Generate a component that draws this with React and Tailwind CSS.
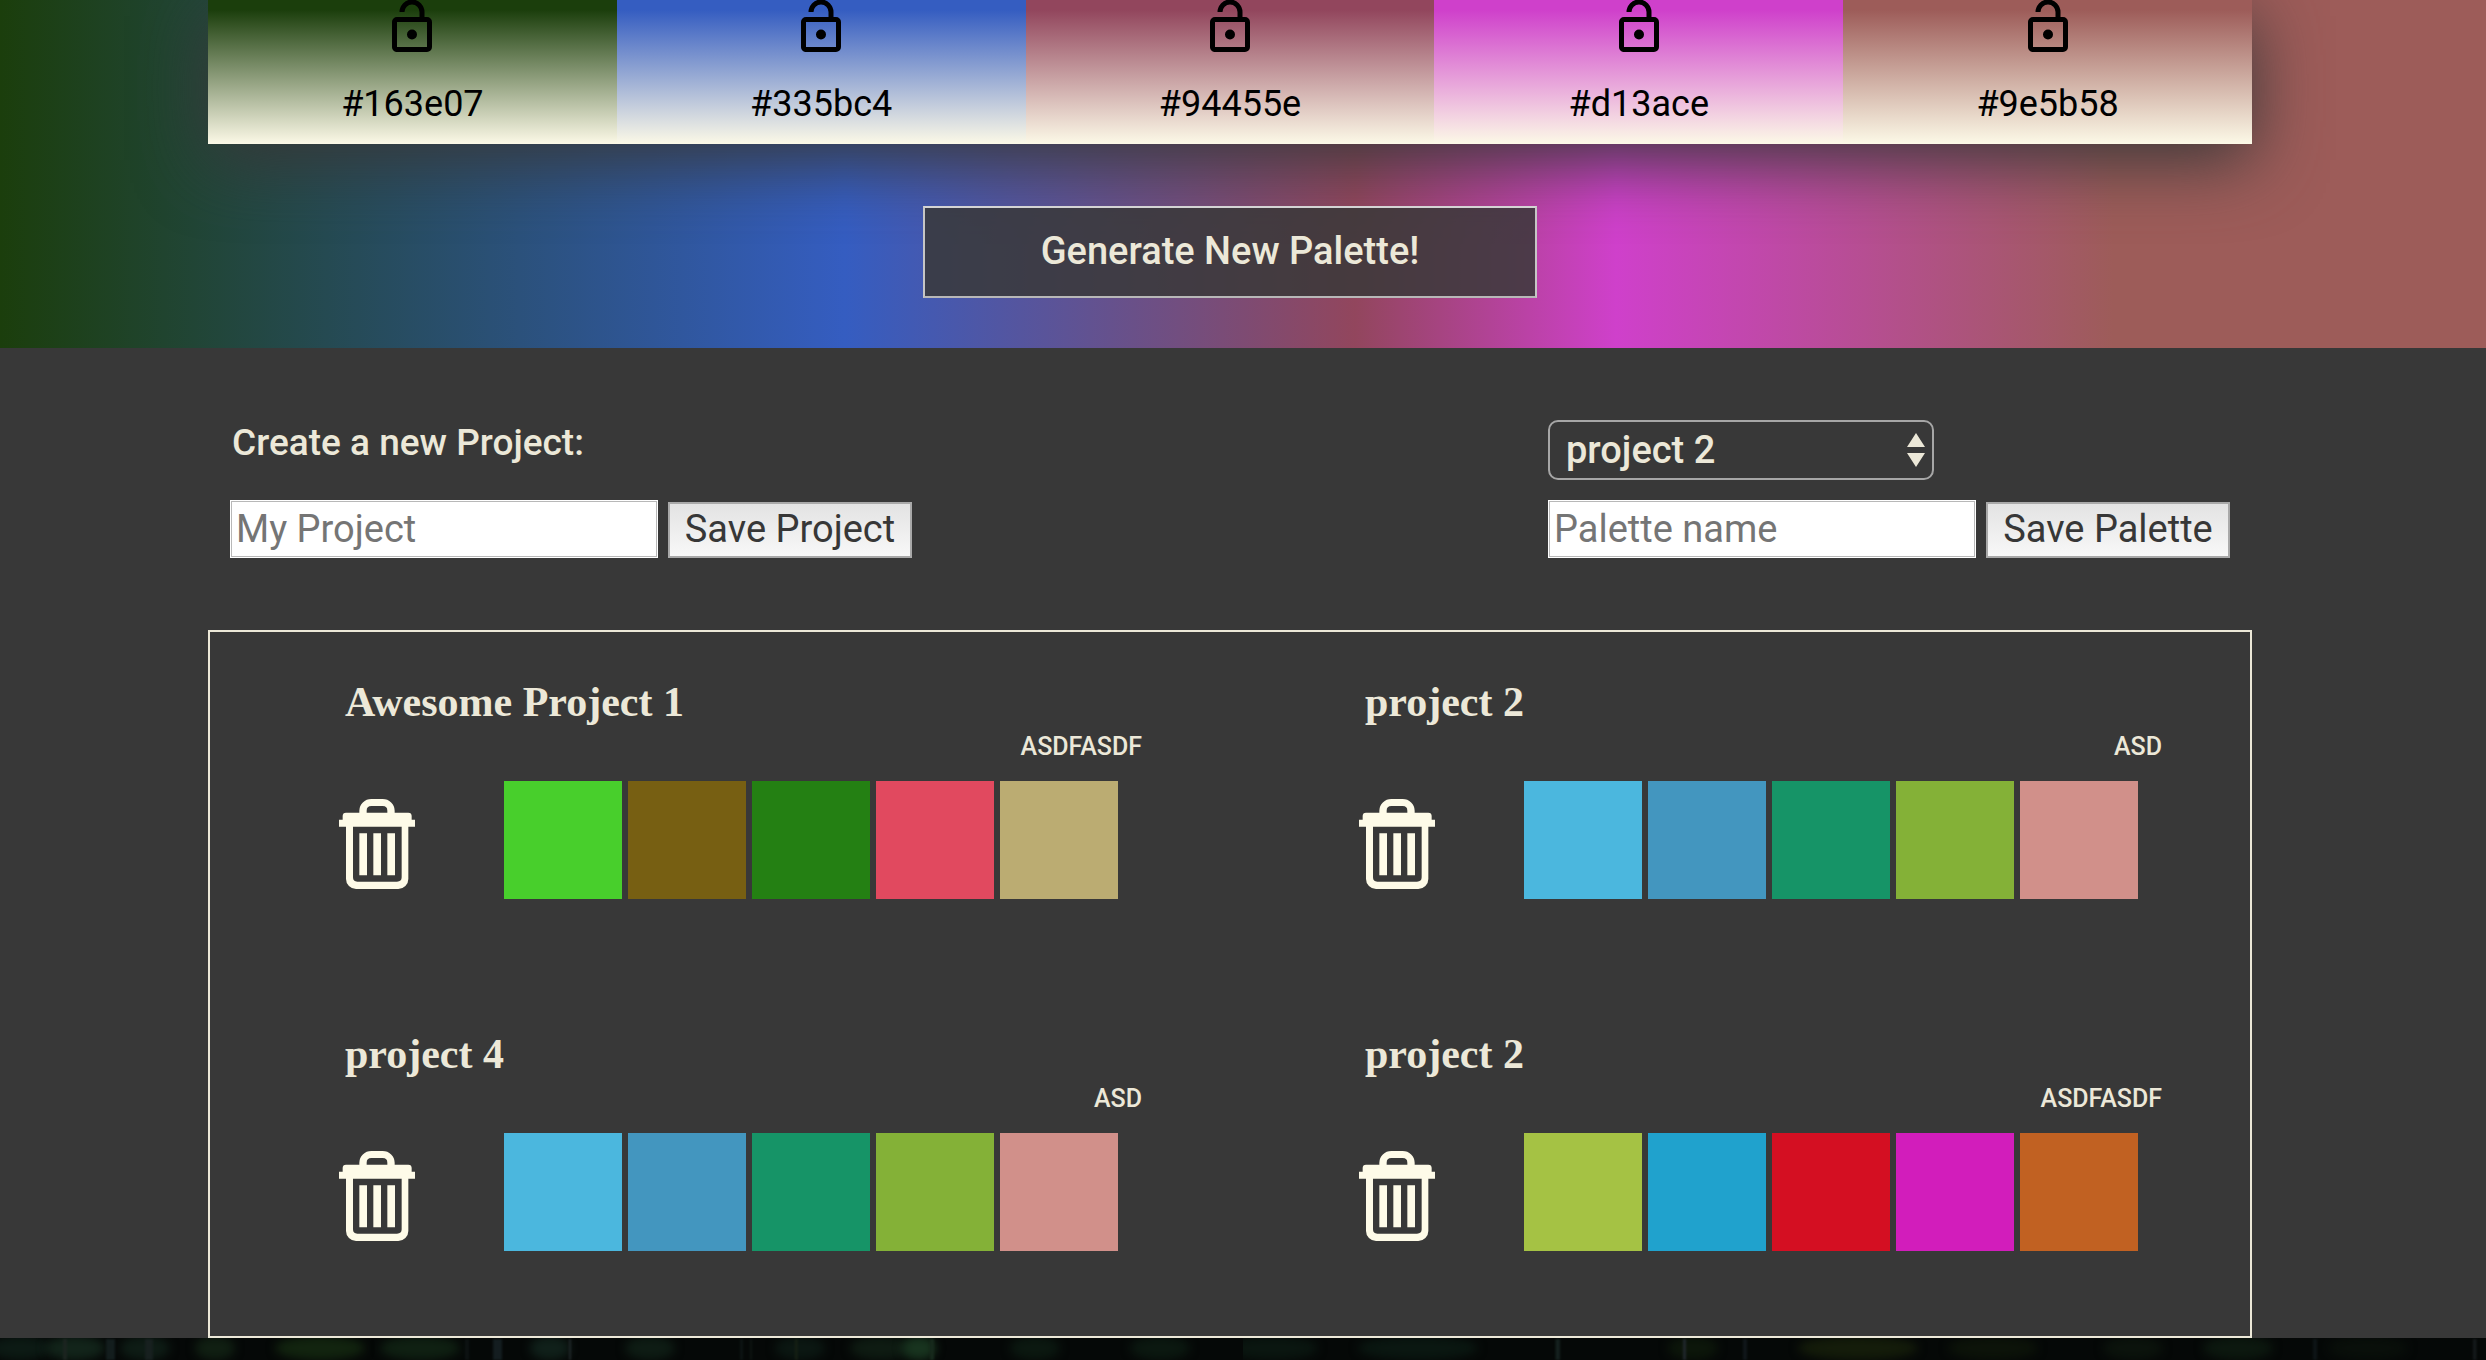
const palette = [
  { hex: "#163e07", swatch: "bg-linear-[180deg,#1b3e0c_10px,#fcf9e7_100%]" },
  { hex: "#335bc4", swatch: "bg-linear-[180deg,#355dc1_10px,#fcf9e7_100%]" },
  { hex: "#94455e", swatch: "bg-linear-[180deg,#92465d_10px,#fcf9e7_100%]" },
  { hex: "#d13ace", swatch: "bg-linear-[180deg,#cf40cb_10px,#fcf9e7_100%]" },
  { hex: "#9e5b58", swatch: "bg-linear-[180deg,#9d5c59_10px,#fcf9e7_100%]" },
];

const lagoon = ["#4bb7de", "#4396bf", "#169467", "#84b137", "#d1908a"];

const projects = [
  { title: "Awesome Project 1", name: "ASDFASDF", colors: ["#48cf2c", "#775f12", "#248013", "#e1495f", "#bbac72"] },
  { title: "project 2", name: "ASD", colors: lagoon },
  { title: "project 4", name: "ASD", colors: lagoon },
  { title: "project 2", name: "ASDFASDF", colors: ["#a5c244", "#20a2cd", "#d40f22", "#d21dbb", "#c16122"] },
];

function LockOpen() {
  return (
    <svg viewBox="0 0 24 24" className="size-15" fill="currentColor" aria-hidden="true">
      <path d="M18,20V10H6V20H18M18,8A2,2 0 0,1 20,10V20A2,2 0 0,1 18,22H6C4.89,22 4,21.1 4,20V10A2,2 0 0,1 6,8H15V6A3,3 0 0,0 12,3A3,3 0 0,0 9,6H7A5,5 0 0,1 12,1A5,5 0 0,1 17,6V8H18M12,17A2,2 0 0,1 10,15A2,2 0 0,1 12,13A2,2 0 0,1 14,15A2,2 0 0,1 12,17Z" />
    </svg>
  );
}

function Trash() {
  return (
    <svg viewBox="57 57 228 270" className="h-[90px] w-[76px]" fill="#fefbe8" aria-hidden="true">
      <path
        fillRule="evenodd"
        d="M118 98V92A36 35 0 0 1 154 57H188A36 35 0 0 1 224 92V98H265Q275 98 275 108V119H285V140H265V297A30 30 0 0 1 235 327H108A30 30 0 0 1 78 297V140H57V119H68V108Q68 98 78 98ZM140 98H202V92Q202 78 188 78H154Q140 78 140 92ZM99 140V292Q99 305 112 305H231Q245 305 245 292V140Z"
      />
      <path d="M118 160H141V286H118ZM160 160H183V286H160ZM202 160H225V286H202Z" />
    </svg>
  );
}

// Dark woodland strip: blurred foliage with faint upright trunks.
const foliage = [
  [40, 60, "#0c1a14"], [150, 60, "#12241a"], [290, 50, "#0e1c15"], [430, 40, "#101f12"], [640, 90, "#12240f"],
  [840, 80, "#0f2012"], [1100, 40, "#10201a"], [1300, 50, "#0e1c14"], [1600, 50, "#0b1712"], [1760, 60, "#0e1b12"],
  [1838, 34, "#18341f"], [2070, 50, "#0b1810"], [2320, 60, "#0b1810"],
];
const foliageRight = [
  [60, 90, "#0a1610"], [350, 120, "#0a1711"], [900, 50, "#0c160a"], [1230, 120, "#141c0a"], [1500, 90, "#0c1309"],
  [1780, 60, "#0b130c"], [1990, 70, "#0c180f"], [2250, 80, "#090f0a"],
];
const trunks = [
  [126, 8, "#1b2420"], [212, 18, "#131d1d"], [290, 16, "#17201f"], [930, 8, "#0d1313"], [986, 18, "#141d20"],
  [1138, 4, "#20272a"], [1480, 6, "#0d1413"], [1500, 4, "#0d1413"], [1590, 5, "#172014"], [1860, 8, "#17291c"],
];
const trunksRight = [[625, 9, "#15211f"], [880, 6, "#20272b"], [1000, 8, "#10171a"], [2140, 8, "#0e1517"], [2460, 7, "#15191b"]];

function ForestHalf({ leaves, stems }) {
  return (
    <svg viewBox="0 0 2486 44" preserveAspectRatio="none" className="h-full w-1/2" aria-hidden="true">
      {leaves.map(([x, r, fill]) => (
        <ellipse key={x} cx={x} cy="20" rx={r} ry="24" fill={fill} className="blur-[10px]" />
      ))}
      {stems.map(([x, w, fill]) => (
        <rect key={x} x={x} y="2" width={w} height="42" fill={fill} className="blur-[2px]" />
      ))}
    </svg>
  );
}

function SaveRow({ id, label, placeholder, action }) {
  return (
    <div className="flex items-end gap-[10px]">
      <input
        id={id}
        aria-label={label}
        placeholder={placeholder}
        className="h-[58px] w-[428px] border border-white bg-white px-[5px] text-[#373737] ring-1 ring-[#b8b8b8] ring-inset placeholder:text-[#757575]"
      />
      <button className="h-14 w-[244px] border-2 border-[#a9a9a9] bg-linear-to-b from-[#e3e3e3] to-[#f8f8f8] pb-[2px] leading-[50px] text-[#373737]">
        {action}
      </button>
    </div>
  );
}

function Project({ title, name, colors }) {
  return (
    <article className="h-[352px] pt-11 pr-[88px]">
      <h2 className="pl-[135px] font-['Liberation_Serif',serif] text-[42px] leading-[52px] font-bold">{title}</h2>
      <p className="text-right text-[25px] leading-[38px] font-medium uppercase">{name}</p>
      <div className="flex pt-[15px] pl-[129px]">
        <button aria-label={`Delete ${name}`} className="mt-[18px] mr-[89px] h-[90px]">
          <Trash />
        </button>
        <ul className="flex gap-[6px]">
          {colors.map((color) => (
            <li key={color} className="size-[118px]" style={{ backgroundColor: color }} />
          ))}
        </ul>
      </div>
    </article>
  );
}

export default function App() {
  return (
    <div className="font-[Roboto,sans-serif] text-[38px] text-[#ece8d8]">
      <header className="bg-linear-[90deg,#1b3e0c_0%,#355dc1_34%,#92465d_54.5%,#cf40cb_65%,#9d5c59_85%] pr-[234px] pb-[50px] pl-[208px]">
        <ul className="grid grid-cols-5 text-black shadow-[0_16px_70px_0_#383838]">
          {palette.map(({ hex, swatch }) => (
            <li key={hex} className={`flex h-36 flex-col items-center ${swatch}`}>
              <button aria-label={`Lock ${hex}`} className="-mt-[3px] h-15">
                <LockOpen />
              </button>
              <span className="mt-[26px] text-[36px] leading-[42px]">{hex}</span>
            </li>
          ))}
        </ul>
        <div className="flex justify-center pt-[62px]">
          <button className="h-[92px] w-[30%] border-2 border-t-[#d4d4d4] border-r-[#c6c6c6] border-b-[#b8b8b8] border-l-[#c6c6c6] bg-[#383838]/85 pb-[2px] font-medium">
            Generate New Palette!
          </button>
        </div>
      </header>

      <main className="bg-[#383838] pt-[72px] pr-[234px] pl-[208px]">
        <div className="flex justify-between px-[22px]">
          <section className="flex flex-col justify-between">
            <label htmlFor="project-name" className="pl-[2px] text-[37px] leading-[46px] font-medium">
              Create a new Project:
            </label>
            <SaveRow id="project-name" label="Project name" placeholder="My Project" action="Save Project" />
          </section>
          <section className="flex flex-col gap-5">
            <div className="relative h-[60px] w-[386px]">
              <select
                aria-label="Project"
                className="size-full appearance-none rounded-[10px] border-2 border-[#a6a6a6] bg-[#383838] px-4 pb-[2px] font-medium"
              >
                <option>project 2</option>
                <option>project 4</option>
                <option>Awesome Project 1</option>
              </select>
              <svg
                viewBox="0 0 18 34"
                className="pointer-events-none absolute top-[13px] right-[9px] h-[34px] w-[18px]"
                fill="currentColor"
                aria-hidden="true"
              >
                <path d="M9 0 18 14H0ZM0 20H18L9 34Z" />
              </svg>
            </div>
            <SaveRow id="palette-name" label="Palette name" placeholder="Palette name" action="Save Palette" />
          </section>
        </div>

        <section className="mt-[72px] grid grid-cols-2 border-2 border-[#ece8d8]">
          {projects.map((project, i) => (
            <Project key={i} {...project} />
          ))}
        </section>
      </main>

      <footer className="flex h-[22px] bg-[#050807]">
        <ForestHalf leaves={foliage} stems={trunks} />
        <ForestHalf leaves={foliageRight} stems={trunksRight} />
      </footer>
    </div>
  );
}
